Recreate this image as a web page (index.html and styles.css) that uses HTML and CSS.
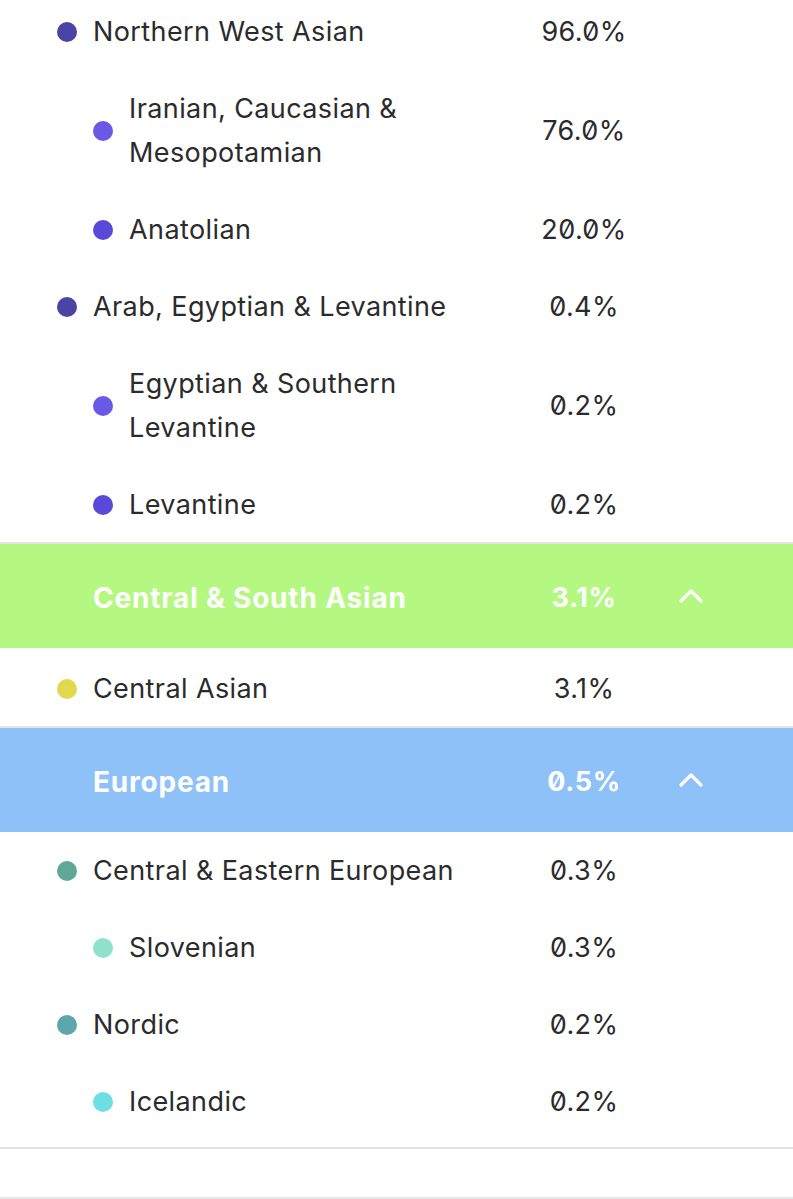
FILE: index.html
```html
<!DOCTYPE html>
<html lang="en">
<head>
<meta charset="utf-8">
<title>Ancestry breakdown</title>
<link rel="stylesheet" href="styles.css">
</head>
<body>
<main class="breakdown">
  <section class="group group-first">
    <div class="row">
      <div class="name"><span class="dot c-nwa"></span><span class="label">Northern West Asian</span></div>
      <div class="pct">96.0%</div>
    </div>
    <div class="row sub">
      <div class="name"><span class="dot c-iran"></span><span class="label">Iranian, Caucasian &amp; Mesopotamian</span></div>
      <div class="pct">76.0%</div>
    </div>
    <div class="row sub">
      <div class="name"><span class="dot c-anat"></span><span class="label">Anatolian</span></div>
      <div class="pct">20.0%</div>
    </div>
    <div class="row">
      <div class="name"><span class="dot c-nwa"></span><span class="label">Arab, Egyptian &amp; Levantine</span></div>
      <div class="pct">0.4%</div>
    </div>
    <div class="row sub">
      <div class="name"><span class="dot c-iran"></span><span class="label">Egyptian &amp; Southern Levantine</span></div>
      <div class="pct">0.2%</div>
    </div>
    <div class="row sub">
      <div class="name"><span class="dot c-anat"></span><span class="label">Levantine</span></div>
      <div class="pct">0.2%</div>
    </div>
  </section>

  <section class="group">
    <header class="head head-green">
      <div class="name"><span class="label">Central &amp; South Asian</span></div>
      <div class="pct">3.1%</div>
      <div class="chev"><svg width="26" height="16" viewBox="0 0 26 16"><polyline points="3,13 13,3 23,13" fill="none" stroke="#fff" stroke-width="3.2" stroke-linecap="round" stroke-linejoin="round"/></svg></div>
    </header>
    <div class="row row-ca">
      <div class="name"><span class="dot c-cas"></span><span class="label">Central Asian</span></div>
      <div class="pct">3.1%</div>
    </div>
  </section>

  <section class="group group-last">
    <header class="head head-blue">
      <div class="name"><span class="label">European</span></div>
      <div class="pct">0.5%</div>
      <div class="chev"><svg width="26" height="16" viewBox="0 0 26 16"><polyline points="3,13 13,3 23,13" fill="none" stroke="#fff" stroke-width="3.2" stroke-linecap="round" stroke-linejoin="round"/></svg></div>
    </header>
    <div class="row">
      <div class="name"><span class="dot c-cee"></span><span class="label">Central &amp; Eastern European</span></div>
      <div class="pct">0.3%</div>
    </div>
    <div class="row sub">
      <div class="name"><span class="dot c-slo"></span><span class="label">Slovenian</span></div>
      <div class="pct">0.3%</div>
    </div>
    <div class="row">
      <div class="name"><span class="dot c-nor"></span><span class="label">Nordic</span></div>
      <div class="pct">0.2%</div>
    </div>
    <div class="row sub">
      <div class="name"><span class="dot c-ice"></span><span class="label">Icelandic</span></div>
      <div class="pct">0.2%</div>
    </div>
  </section>
  <div class="footer-space"></div>
</main>
</body>
</html>
```

FILE: styles.css
```css
html, body {
  margin: 0;
  padding: 0;
  background: #ffffff;
}

body {
  font-family: "Inter", "Noto Sans", "Liberation Sans", sans-serif;
  color: #2b2b2d;
  font-size: 27px;
  letter-spacing: 0.4px;
  line-height: 44px;
  overflow: hidden;
}

.breakdown {
  margin-top: -6px;
}

.group-first .row:last-child {
  padding-bottom: 15px;
}

.group + .group {
  border-top: 2px solid #e3e3e3;
}

.group-last {
  padding-bottom: 7px;
  border-bottom: 2px solid #e3e3e3;
}

.footer-space {
  height: 48px;
  border-bottom: 2px solid #e6e6e6;
}

.row,
.head {
  display: flex;
  align-items: center;
  padding-left: 57px;
}

.row {
  padding-top: 16px;
  padding-bottom: 17px;
}

.group-last .row {
  padding-top: 17px;
  padding-bottom: 16px;
}

.row-ca {
  padding-top: 19px;
  padding-bottom: 15px;
}

.row.sub {
  padding-left: 93px;
}

.name {
  display: flex;
  align-items: center;
  gap: 16px;
  flex: 0 0 auto;
  width: 442px;
}

.row.sub .name {
  width: 406px;
}

.label {
  display: block;
  max-width: 370px;
}

.row:not(.sub) .label {
  max-width: 400px;
}

.dot {
  flex: 0 0 20px;
  width: 20px;
  height: 20px;
  border-radius: 50%;
}

.pct {
  width: 170px;
  flex: 0 0 170px;
  text-align: center;
  font-feature-settings: "zero" 1;
}

.head {
  box-sizing: border-box;
  height: 104px;
  padding-left: 93px;
  padding-top: 3px;
  color: #ffffff;
  font-weight: 700;
  font-size: 28px;
  letter-spacing: 0.8px;
}

.head .name {
  width: 406px;
}

.head .pct {
  font-size: 27px;
  letter-spacing: 0.6px;
}

.chev {
  width: 44px;
  display: flex;
  justify-content: center;
  padding-bottom: 4px;
}

.head-green {
  background: #b4f882;
}

.head-blue {
  background: #8dc1f7;
}

.c-nwa { background: #4c44a4; }
.c-iran { background: #6a58e6; }
.c-anat { background: #5a49d8; }
.c-cas { background: #e2d84c; }
.c-cee { background: #5fa898; }
.c-slo { background: #8fe0cc; }
.c-nor { background: #5ea6ae; }
.c-ice { background: #6ddfe3; }
```
